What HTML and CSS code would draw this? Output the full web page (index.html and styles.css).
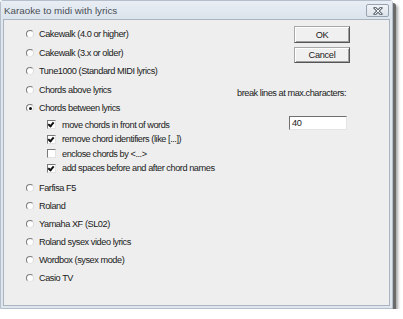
FILE: index.html
```html
<!DOCTYPE html>
<html lang="en">
<head>
  <meta charset="UTF-8" />
  <title>Karaoke to midi with lyrics</title>
  <link rel="stylesheet" href="styles.css">
</head>
<body>
  <div class="window">
    <div class="titlebar">
      <span class="title">Karaoke to midi with lyrics</span>
      <span class="close">
        <svg width="12" height="8" viewBox="0 0 12 8">
          <path d="M3 1 L9 7 M9 1 L3 7" stroke="#6c7580" stroke-width="3" stroke-linecap="square"/>
          <path d="M3 1 L9 7 M9 1 L3 7" stroke="#f2f2f2" stroke-width="1"/>
        </svg>
      </span>
    </div>

    <div class="client">
      <div class="options">
        <div class="group">
          <div class="radio-row"><span class="radio"></span>Cakewalk (4.0 or higher)</div>
          <div class="radio-row"><span class="radio"></span>Cakewalk (3.x or older)</div>
          <div class="radio-row"><span class="radio"></span>Tune1000 (Standard MIDI lyrics)</div>
          <div class="radio-row"><span class="radio"></span>Chords above lyrics</div>
          <div class="radio-row"><span class="radio checked"></span>Chords between lyrics</div>
        </div>

        <div class="checks">
          <div class="check-row"><span class="check on"></span>move chords in front of words</div>
          <div class="check-row"><span class="check on"></span>remove chord identifiers (like [...])</div>
          <div class="check-row"><span class="check"></span>enclose chords by &lt;...&gt;</div>
          <div class="check-row"><span class="check on"></span>add spaces before and after chord names</div>
        </div>

        <div class="group lower">
          <div class="radio-row"><span class="radio"></span>Farfisa F5</div>
          <div class="radio-row"><span class="radio"></span>Roland</div>
          <div class="radio-row"><span class="radio"></span>Yamaha XF (SL02)</div>
          <div class="radio-row"><span class="radio"></span>Roland sysex video lyrics</div>
          <div class="radio-row"><span class="radio"></span>Wordbox (sysex mode)</div>
          <div class="radio-row"><span class="radio"></span>Casio TV</div>
        </div>
      </div>

      <div class="side">
        <button class="btn">OK</button>
        <button class="btn cancel">Cancel</button>
        <div class="label">break lines at max.characters:</div>
        <div class="field">40</div>
      </div>
    </div>
  </div>
</body>
</html>
```

FILE: styles.css
```css
body {
  margin: 0;
  background: #fff;
  font-family: "Liberation Sans", Arial, sans-serif;
  font-size: 9.2px;
  letter-spacing: -0.45px;
  color: #1a1a1a;
}
.window {
  width: 393px;
  height: 309px;
  box-sizing: border-box;
  background: #dfe6ee;
  border: 1px solid #b4bfcb;
  border-radius: 3px 3px 0 0;
  display: flex;
  flex-direction: column;
  box-shadow: 3px 3px 0 #6b6b6b, 5px 5px 3px rgba(0,0,0,0.35);
}
.titlebar {
  height: 18px;
  display: flex;
  align-items: center;
  justify-content: space-between;
  padding: 0 3px 0 3px;
  background: linear-gradient(#e9eef4, #dbe3ec);
}
.title {
  font-size: 9.8px;
  letter-spacing: 0;
  color: #4a4f55;
}
.close {
  width: 21px;
  height: 11px;
  border: 1px solid #97a3b0;
  border-radius: 2px;
  background: linear-gradient(#f1f4f7, #dde3ea);
  display: flex;
  align-items: center;
  justify-content: center;
  margin-top: 1px;
}
.client {
  flex: 1;
  margin: 0 2px 2px 2px;
  background: #eeeeee;
  border: 1px solid #a9b4c0;
  display: flex;
}
.options {
  width: 211px;
  padding: 5px 0 0 22px;
  white-space: nowrap;
}
.radio-row, .check-row {
  display: flex;
  align-items: center;
}
.radio-row {
  height: 18.5px;
}
.lower {
  margin-top: 3px;
}
.lower .radio-row {
  height: 18px;
}
.radio {
  width: 8px;
  height: 8px;
  box-sizing: border-box;
  border-radius: 50%;
  background: #fff;
  border: 1px solid;
  border-color: #7c7c7c #dcdcdc #e6e6e6 #7c7c7c;
  margin-right: 5px;
  position: relative;
}
.radio.checked::after {
  content: "";
  position: absolute;
  left: 1.5px;
  top: 1.5px;
  width: 3px;
  height: 3px;
  border-radius: 50%;
  background: #111;
}
.checks {
  padding-left: 21px;
}
.check-row {
  height: 14.5px;
}
.check {
  width: 9px;
  height: 9px;
  box-sizing: border-box;
  background: #fff;
  border: 1px solid;
  border-color: #7a7a7a #e2e2e2 #e2e2e2 #7a7a7a;
  margin-right: 6px;
  position: relative;
}
.check.on::after {
  content: "";
  position: absolute;
  left: 1px;
  top: 0;
  width: 2px;
  height: 4px;
  border: solid #111;
  border-width: 0 2px 2px 0;
  transform: rotate(40deg);
}
.side {
  display: flex;
  flex-direction: column;
  align-items: flex-start;
  padding-top: 6px;
  white-space: nowrap;
}
.btn {
  width: 56px;
  height: 17px;
  margin-left: 57px;
  padding: 0;
  font-family: inherit;
  font-size: 9.2px;
  letter-spacing: -0.3px;
  color: #1a1a1a;
  background: #f0f0f0;
  border: 1px solid;
  border-color: #a8a8a8 #555 #555 #a8a8a8;
  box-shadow: inset 1px 1px 0 #fff, inset -1px -1px 0 #a0a0a0;
}
.cancel {
  margin-top: 4px;
  height: 16px;
}
.label {
  margin-top: 24px;
  height: 12px;
  line-height: 12px;
}
.field {
  margin: 17px 0 0 52px;
  width: 58px;
  height: 14px;
  box-sizing: border-box;
  background: #fff;
  border: 1px solid;
  border-color: #707070 #e4e4e4 #e4e4e4 #707070;
  padding-left: 2px;
  line-height: 12px;
}
```
